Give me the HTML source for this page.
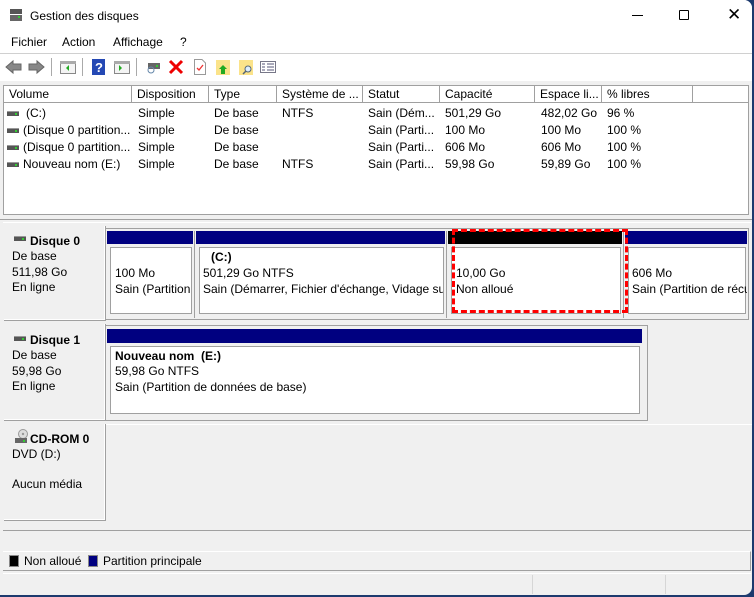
<!DOCTYPE html>
<html><head><meta charset="utf-8"><style>
*{margin:0;padding:0;box-sizing:border-box}
body{width:754px;height:597px;background:#1d3a6e;font-family:"Liberation Sans",sans-serif;font-size:12px;color:#000;position:relative;overflow:hidden}
.a{position:absolute}
.win{left:0;top:0;width:752px;height:595px;background:#f0f0f0;border-radius:0 8px 8px 0;overflow:hidden}
.t{position:absolute;white-space:nowrap;line-height:14px}
.hd{position:absolute;top:86px;height:17px;background:#fff;border-right:1px solid #a0a0a0;border-bottom:1px solid #a0a0a0;padding-left:5px;line-height:16px;white-space:nowrap;overflow:hidden}
.bar{position:absolute;background:#000080}
.pbox{position:absolute;background:#fff;border:1px solid #a0a0a0;box-shadow:0 0 0 2px #f0f0f0}
.ico{position:absolute;width:12px;height:5px;background:#555;border-top:1px solid #999}
.ico:after{content:"";position:absolute;right:2px;top:1px;width:2px;height:2px;background:#3c3}
.lbl{position:absolute;left:4px;width:102px;background:#f0f0f0;border-right:1px solid #a0a0a0;border-bottom:1px solid #a0a0a0;box-shadow:inset -1px -1px 0 #fff}
</style></head><body>
<div class="a win">
 <div class="a" style="left:0;top:0;width:752px;height:53px;background:#fff"></div>
 <div class="a" style="left:10px;top:9px;width:12px;height:5px;background:#555"></div>
 <div class="a" style="left:10px;top:15px;width:12px;height:6px;background:#666"></div>
 <div class="a" style="left:18px;top:16px;width:2px;height:2px;background:#3c3"></div>
 <div class="t" style="left:30px;top:9px">Gestion des disques</div>
 <div class="a" style="left:632px;top:15px;width:11px;height:1px;background:#000"></div>
 <div class="a" style="left:679px;top:10px;width:10px;height:10px;border:1px solid #000;border-radius:1px"></div>
 <div class="t" style="left:727px;top:6px;font-size:17px;line-height:18px;font-weight:300">✕</div>
 <div class="t" style="left:11px;top:35px">Fichier</div>
 <div class="t" style="left:62px;top:35px">Action</div>
 <div class="t" style="left:113px;top:35px">Affichage</div>
 <div class="t" style="left:180px;top:35px">?</div>
 <div class="a" style="left:0;top:53px;width:752px;height:28px;background:#fff;border-top:1px solid #d0d0d0"></div>
 <svg class="a" style="left:0;top:53px" width="290" height="28">
  <path d="M6 14 L13 8 L13 11 L21 11 L21 17 L13 17 L13 20 Z" fill="#888" stroke="#666"/>
  <path d="M44 14 L37 8 L37 11 L29 11 L29 17 L37 17 L37 20 Z" fill="#888" stroke="#666"/>
  <rect x="51" y="5" width="1" height="18" fill="#aaa"/>
  <rect x="60.5" y="8.5" width="15" height="12" fill="#f4f4f4" stroke="#888"/><rect x="60" y="8" width="16" height="3" fill="#aaa"/><path d="M69 12 L66 15 L69 18Z" fill="#2a2"/>
  <rect x="82" y="5" width="1" height="18" fill="#aaa"/>
  <rect x="92" y="6" width="13" height="16" fill="#2448b4"/><text x="95" y="19" fill="#fff" font-size="13" font-weight="bold" font-family="Liberation Sans">?</text>
  <rect x="114.5" y="8.5" width="15" height="12" fill="#f4f4f4" stroke="#888"/><rect x="114" y="8" width="16" height="3" fill="#aaa"/><path d="M119 12 L122 15 L119 18Z" fill="#2a2"/>
  <rect x="136" y="5" width="1" height="18" fill="#aaa"/>
  <rect x="148" y="10" width="12" height="6" fill="#666"/><circle cx="151" cy="17" r="3" fill="none" stroke="#68a"/><rect x="156" y="12" width="2" height="2" fill="#3c3"/>
  <path d="M170 8 L182 20 M182 8 L170 20" stroke="#e00" stroke-width="3"/>
  <path d="M194.5 6.5 H202 L205.5 10 V21.5 H194.5Z" fill="#fff" stroke="#999"/><path d="M197 15 L199 17 L203 12" stroke="#e33" fill="none" stroke-width="1.3"/>
  <rect x="216" y="7" width="14" height="15" fill="#fbe38a"/><path d="M223 12 L227 16 H225 V21 H221 V16 H219Z" fill="#2a2"/>
  <rect x="239" y="7" width="14" height="15" fill="#fbe38a"/><circle cx="248" cy="16" r="3" fill="#ddeeff" stroke="#567"/><path d="M246 18 L243 21" stroke="#567" stroke-width="1.5"/>
  <rect x="260.5" y="8.5" width="15" height="11" fill="#fff" stroke="#778"/><path d="M262 11 H265 M262 14 H265 M262 17 H265 M267 11 H274 M267 14 H274 M267 17 H274" stroke="#557"/>
 </svg>
 <div class="a" style="left:3px;top:85px;width:748px;height:130px;background:#fff;border:1px solid #a0a0a0;border-right:none"></div>
 <div class="hd" style="left:4px;width:128px">Volume</div>
 <div class="hd" style="left:132px;width:77px">Disposition</div>
 <div class="hd" style="left:209px;width:68px">Type</div>
 <div class="hd" style="left:277px;width:86px">Système de ...</div>
 <div class="hd" style="left:363px;width:77px">Statut</div>
 <div class="hd" style="left:440px;width:95px">Capacité</div>
 <div class="hd" style="left:535px;width:67px">Espace li...</div>
 <div class="hd" style="left:602px;width:91px">% libres</div>
 <div class="hd" style="left:693px;width:56px"></div>
 <div class="a" style="left:748px;top:85px;width:3px;height:130px;background:#f0f0f0;border-left:1px solid #a0a0a0"></div>

 <div class="ico" style="left:7px;top:111px"></div>
 <div class="ico" style="left:7px;top:128px"></div>
 <div class="ico" style="left:7px;top:145px"></div>
 <div class="ico" style="left:7px;top:162px"></div>
 <div class="t" style="left:26px;top:106px">(C:)</div>
 <div class="t" style="left:23px;top:123px">(Disque 0 partition...</div>
 <div class="t" style="left:23px;top:140px">(Disque 0 partition...</div>
 <div class="t" style="left:23px;top:157px">Nouveau nom (E:)</div>
 <div class="t" style="left:138px;top:106px">Simple</div>
 <div class="t" style="left:138px;top:123px">Simple</div><div class="t" style="left:138px;top:140px">Simple</div><div class="t" style="left:138px;top:157px">Simple</div>
 <div class="t" style="left:214px;top:106px">De base</div><div class="t" style="left:214px;top:123px">De base</div><div class="t" style="left:214px;top:140px">De base</div><div class="t" style="left:214px;top:157px">De base</div>
 <div class="t" style="left:282px;top:106px">NTFS</div><div class="t" style="left:282px;top:157px">NTFS</div>
 <div class="t" style="left:368px;top:106px">Sain (Dém...</div><div class="t" style="left:368px;top:123px">Sain (Parti...</div><div class="t" style="left:368px;top:140px">Sain (Parti...</div><div class="t" style="left:368px;top:157px">Sain (Parti...</div>
 <div class="t" style="left:445px;top:106px">501,29 Go</div><div class="t" style="left:445px;top:123px">100 Mo</div><div class="t" style="left:445px;top:140px">606 Mo</div><div class="t" style="left:445px;top:157px">59,98 Go</div>
 <div class="t" style="left:541px;top:106px">482,02 Go</div><div class="t" style="left:541px;top:123px">100 Mo</div><div class="t" style="left:541px;top:140px">606 Mo</div><div class="t" style="left:541px;top:157px">59,89 Go</div>
 <div class="t" style="left:607px;top:106px">96 %</div><div class="t" style="left:607px;top:123px">100 %</div><div class="t" style="left:607px;top:140px">100 %</div><div class="t" style="left:607px;top:157px">100 %</div>

 <div class="a" style="left:0;top:219px;width:752px;height:1px;background:#a0a0a0"></div>
 <div class="a" style="left:3px;top:222px;width:748px;height:1px;background:#fff"></div>

 <div class="lbl" style="top:226px;height:95px"></div>
 <div class="ico" style="left:14px;top:236px"></div>
 <div class="t" style="left:30px;top:234px;font-weight:bold">Disque 0</div>
 <div class="t" style="left:12px;top:249px;line-height:15.5px">De base<br>511,98 Go<br>En ligne</div>
 <div class="a" style="left:106px;top:228px;width:643px;height:92px;background:#f0f0f0;border:1px solid #a0a0a0;border-left:none"></div>
 <div class="bar" style="left:107px;top:231px;width:86px;height:13px"></div>
 <div class="bar" style="left:196px;top:231px;width:249px;height:13px"></div>
 <div class="bar" style="left:448px;top:231px;width:174px;height:13px;background:#000"></div>
 <div class="bar" style="left:625px;top:231px;width:122px;height:13px"></div>
 <div class="a" style="left:194px;top:231px;width:1px;height:87px;background:#a0a0a0"></div>
 <div class="a" style="left:446px;top:231px;width:1px;height:87px;background:#a0a0a0"></div>
 <div class="a" style="left:623px;top:231px;width:1px;height:87px;background:#a0a0a0"></div>
 <div class="pbox" style="left:110px;top:247px;width:82px;height:67px"></div>
 <div class="pbox" style="left:199px;top:247px;width:245px;height:67px"></div>
 <div class="pbox" style="left:451px;top:247px;width:170px;height:67px"></div>
 <div class="pbox" style="left:628px;top:247px;width:118px;height:67px"></div>
 <div class="t" style="left:115px;top:266px;line-height:15.5px;width:76px;overflow:hidden">100 Mo<br>Sain (Partition</div>
 <div class="t" style="left:211px;top:250px;font-weight:bold">(C:)</div>
 <div class="t" style="left:203px;top:266px;line-height:15.5px;width:240px;overflow:hidden">501,29 Go NTFS<br>Sain (Démarrer, Fichier d'échange, Vidage sur</div>
 <div class="t" style="left:456px;top:266px;line-height:15.5px">10,00 Go<br>Non alloué</div>
 <div class="t" style="left:632px;top:266px;line-height:15.5px;width:115px;overflow:hidden">606 Mo<br>Sain (Partition de récu</div>
 <div class="a" style="left:452px;top:229px;width:176px;height:84px;border:3px dashed #f00"></div>

 <div class="lbl" style="top:324px;height:97px"></div>
 <div class="ico" style="left:14px;top:336px"></div>
 <div class="t" style="left:30px;top:333px;font-weight:bold">Disque 1</div>
 <div class="t" style="left:12px;top:348px;line-height:15.5px">De base<br>59,98 Go<br>En ligne</div>
 <div class="a" style="left:106px;top:325px;width:542px;height:96px;border:1px solid #a0a0a0;border-left:none"></div>
 <div class="bar" style="left:107px;top:329px;width:535px;height:14px"></div>
 <div class="pbox" style="left:110px;top:346px;width:530px;height:68px"></div>
 <div class="t" style="left:115px;top:349px;font-weight:bold">Nouveau nom&nbsp; (E:)</div>
 <div class="t" style="left:115px;top:364px;line-height:15.5px">59,98 Go NTFS<br>Sain (Partition de données de base)</div>
 <div class="a" style="left:106px;top:424px;width:646px;height:1px;background:#fff"></div>

 <div class="lbl" style="top:424px;height:97px"></div>
 <svg class="a" style="left:14px;top:428px" width="16" height="16"><circle cx="9" cy="6" r="4.5" fill="#ddd" stroke="#999"/><circle cx="9" cy="6" r="1.2" fill="#999"/><rect x="1" y="10" width="12" height="5" fill="#666"/><rect x="9" y="12" width="2" height="2" fill="#3c3"/></svg>
 <div class="t" style="left:30px;top:432px;font-weight:bold">CD-ROM 0</div>
 <div class="t" style="left:12px;top:447px">DVD (D:)</div>
 <div class="t" style="left:12px;top:477px">Aucun média</div>

 <div class="a" style="left:3px;top:530px;width:748px;height:1px;background:#a0a0a0"></div>
 <div class="a" style="left:3px;top:551px;width:748px;height:20px;border-top:1px solid #fff;border-bottom:1px solid #a0a0a0;border-right:1px solid #a0a0a0"></div>
 <div class="a" style="left:9px;top:555px;width:10px;height:12px;background:#000;border:1px solid #888"></div>
 <div class="t" style="left:24px;top:554px">Non alloué</div>
 <div class="a" style="left:88px;top:555px;width:10px;height:12px;background:#000080;border:1px solid #888"></div>
 <div class="t" style="left:103px;top:554px">Partition principale</div>
 <div class="a" style="left:3px;top:573px;width:748px;height:1px;background:#fff"></div>
 <div class="a" style="left:532px;top:575px;width:1px;height:19px;background:#d6d6d6"></div>
 <div class="a" style="left:665px;top:575px;width:1px;height:19px;background:#d6d6d6"></div>
</div>
</body></html>
